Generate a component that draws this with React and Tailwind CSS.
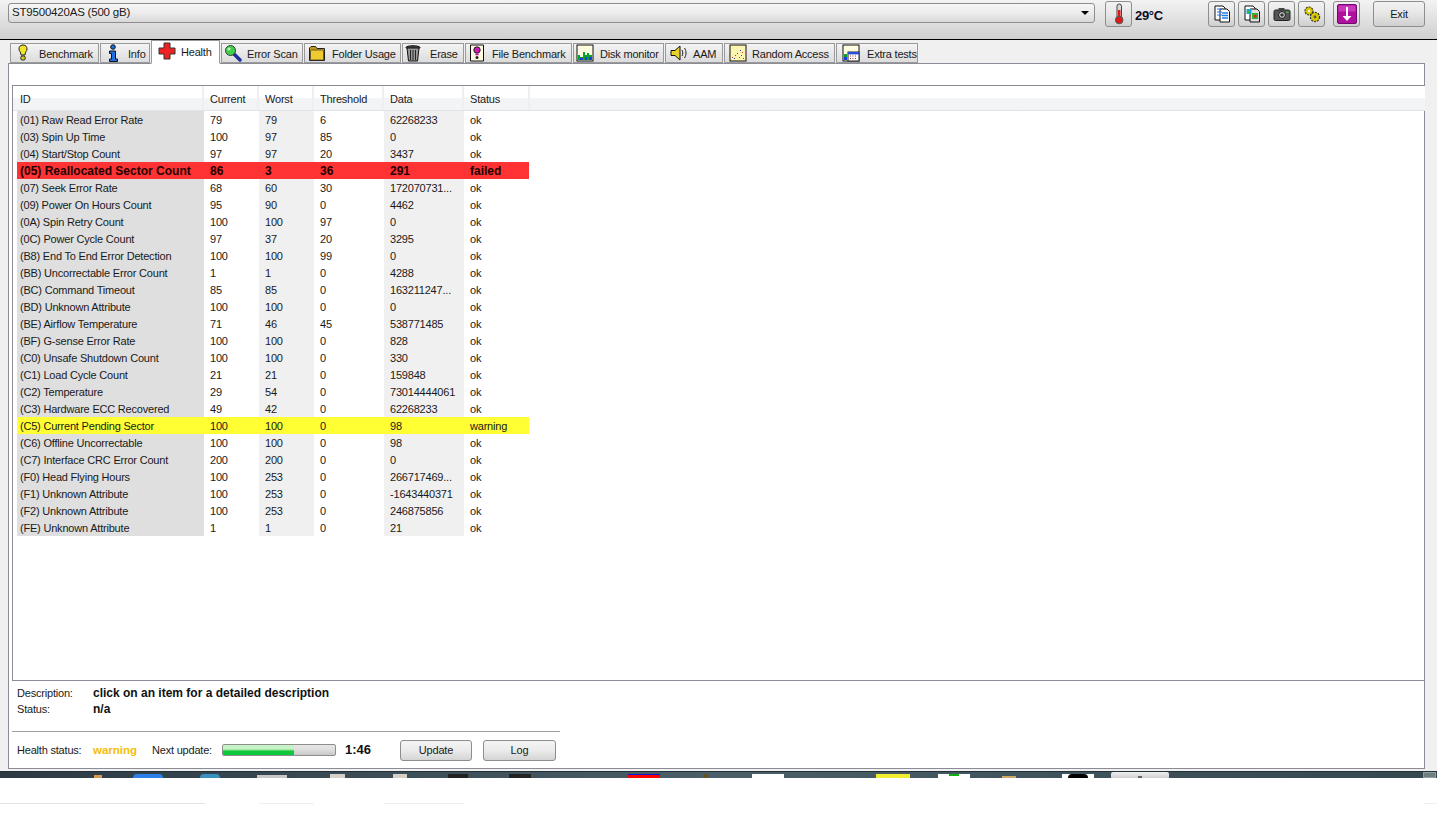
import React from "react";

const rows = [
  ["(01) Raw Read Error Rate", "79", "79", "6", "62268233", "ok"],
  ["(03) Spin Up Time", "100", "97", "85", "0", "ok"],
  ["(04) Start/Stop Count", "97", "97", "20", "3437", "ok"],
  ["(05) Reallocated Sector Count", "86", "3", "36", "291", "failed", "red"],
  ["(07) Seek Error Rate", "68", "60", "30", "172070731...", "ok"],
  ["(09) Power On Hours Count", "95", "90", "0", "4462", "ok"],
  ["(0A) Spin Retry Count", "100", "100", "97", "0", "ok"],
  ["(0C) Power Cycle Count", "97", "37", "20", "3295", "ok"],
  ["(B8) End To End Error Detection", "100", "100", "99", "0", "ok"],
  ["(BB) Uncorrectable Error Count", "1", "1", "0", "4288", "ok"],
  ["(BC) Command Timeout", "85", "85", "0", "163211247...", "ok"],
  ["(BD) Unknown Attribute", "100", "100", "0", "0", "ok"],
  ["(BE) Airflow Temperature", "71", "46", "45", "538771485", "ok"],
  ["(BF) G-sense Error Rate", "100", "100", "0", "828", "ok"],
  ["(C0) Unsafe Shutdown Count", "100", "100", "0", "330", "ok"],
  ["(C1) Load Cycle Count", "21", "21", "0", "159848", "ok"],
  ["(C2) Temperature", "29", "54", "0", "73014444061", "ok"],
  ["(C3) Hardware ECC Recovered", "49", "42", "0", "62268233", "ok"],
  ["(C5) Current Pending Sector", "100", "100", "0", "98", "warning", "yellow"],
  ["(C6) Offline Uncorrectable", "100", "100", "0", "98", "ok"],
  ["(C7) Interface CRC Error Count", "200", "200", "0", "0", "ok"],
  ["(F0) Head Flying Hours", "100", "253", "0", "266717469...", "ok"],
  ["(F1) Unknown Attribute", "100", "253", "0", "-1643440371", "ok"],
  ["(F2) Unknown Attribute", "100", "253", "0", "246875856", "ok"],
  ["(FE) Unknown Attribute", "1", "1", "0", "21", "ok"],
];

const S = ({ children, w = 18, h = 18, vb = "0 0 18 18" }) => (
  <svg width={w} height={h} viewBox={vb} className="shrink-0">{children}</svg>
);

const Bulb = () => (
  <S>
    <path d="M9 1c3 0 4 2 4 4 0 2-2 3-2 6H7c0-3-2-4-2-6 0-2 1-4 4-4z" fill="#f2e52a" stroke="#222" />
    <rect x="6.8" y="12" width="4.4" height="4" rx="1.5" fill="#d8c820" stroke="#222" />
  </S>
);
const Info = () => (
  <S>
    <circle cx="9" cy="3" r="2.3" fill="#1f6fe0" stroke="#111" />
    <path d="M5.5 7h6v8h2v2.5h-8V15h2V9.5h-2z" fill="#1f6fe0" stroke="#111" />
  </S>
);
const Cross = () => (
  <S>
    <path d="M6 1h6v5h5v6h-5v5H6v-5H1V6h5z" fill="#ee2222" stroke="#333" />
  </S>
);
const Mag = () => (
  <S>
    <path d="M10 10l6 6" stroke="#1d2f9a" strokeWidth="3.4" strokeLinecap="round" />
    <circle cx="6.5" cy="6.5" r="5" fill="#3fd04a" stroke="#3a3a3a" />
    <circle cx="5" cy="5" r="1.6" fill="#b9f3bc" />
  </S>
);
const Folder = () => (
  <S>
    <path d="M1.5 4V16.500h15V4.500H9L7.500 2.500H3z" fill="#c89c10" stroke="#222" />
    <rect x="2.500" y="6" width="13" height="10" rx="1" fill="#eecb2e" stroke="#333" strokeWidth=".7" />
  </S>
);
const Trash = () => (
  <S>
    <ellipse cx="9" cy="3.500" rx="7" ry="1.800" fill="#444" stroke="#111" />
    <path d="M3 4l1.500 13h9L15 4z" fill="#999" stroke="#111" />
    <path d="M6.500 6v10M9 6v10M11.500 6v10" stroke="#222" />
  </S>
);
const FileEx = () => (
  <S>
    <path d="M2.500 1h13v16h-13z" fill="#fffbe0" stroke="#111" />
    <circle cx="9" cy="6" r="3.200" fill="#d018b8" stroke="#222" />
    <rect x="7.300" y="9.500" width="3.400" height="1.800" fill="#d018b8" />
    <circle cx="9" cy="13.500" r="1.500" fill="#222" />
  </S>
);
const Chart = () => (
  <S>
    <rect x="1" y="1" width="16" height="16" fill="#fffde0" stroke="#111" />
    <path d="M2 16V11h2v5zM4 16V13h3v3zM7 16V8h2v8zM9 16v-5h2v5zM11 16V9h2v7zM13 16v-5h3v5z" fill="#0aa02a" />
    <path d="M4 16v-2h3v2zM9 16v-3h2v3zM13 16v-3h3v3z" fill="#1a3fe0" />
  </S>
);
const Speaker = () => (
  <S>
    <path d="M1 6.500h4L10 2v14l-5-4.500H1z" fill="#e8d22a" stroke="#111" />
    <path d="M12 6c1 1.500 1 4.500 0 6M14.500 4c2 3 2 7 0 10" stroke="#222" fill="none" />
  </S>
);
const Scatter = () => (
  <S>
    <rect x="1" y="1" width="16" height="16" fill="#fdf6b0" stroke="#111" />
    <g fill="#e02020"><rect x="3" y="13" width="1" height="1" /><rect x="6" y="11" width="1" height="1" /><rect x="10" y="13" width="1" height="1" /><rect x="13" y="8" width="1" height="1" /><rect x="14" y="14" width="1" height="1" /></g>
    <g fill="#2040d0"><rect x="5" y="14" width="1" height="1" /><rect x="8" y="9" width="1" height="1" /><rect x="11" y="6" width="1" height="1" /><rect x="12" y="11" width="1" height="1" /></g>
  </S>
);
const ChartCal = () => (
  <S>
    <rect x="1" y="1" width="16" height="16" fill="#fffde0" stroke="#111" />
    <path d="M2 16v-6h3v6z" fill="#0aa02a" />
    <path d="M2 16v-3h3v3z" fill="#1a3fe0" />
    <rect x="6" y="8" width="11" height="9" fill="#fff" stroke="#222" />
    <rect x="6" y="8" width="11" height="2.400" fill="#2a50d8" />
    <path d="M8 12h1M10.500 12h1M13 12h1M8 14.500h1M10.500 14.500h1M13 14.500h1" stroke="#c03030" />
  </S>
);

const Thermo = () => (
  <S w={18} h={22} vb="0 0 18 22">
    <rect x="7" y="1" width="4.500" height="15" rx="2.200" fill="#d8d8d8" stroke="#444" />
    <rect x="8" y="7" width="2.500" height="9" fill="#e01818" />
    <circle cx="9.200" cy="17" r="3.800" fill="#e01818" stroke="#555" />
  </S>
);
const CopyText = () => (
  <S>
    <path d="M2 1h8l2 2v12H2z" fill="#fff" stroke="#111" />
    <path d="M7 4h7l2.500 2.500V17H7z" fill="#fff" stroke="#111" />
    <path d="M4 4h5M4 7h5M4 10h5" stroke="#1f7be8" />
    <path d="M9 8h6M9 10.500h6M9 13h6" stroke="#1f7be8" strokeWidth="1.300" />
  </S>
);
const CopyPic = () => (
  <S>
    <path d="M2 1h8l2 2v12H2z" fill="#fff" stroke="#111" />
    <path d="M7 4h7l2.500 2.500V17H7z" fill="#ddd" stroke="#111" />
    <rect x="3.500" y="4" width="5" height="5" fill="#1fa4d8" />
    <rect x="5" y="6" width="2" height="2" fill="#2fc02a" />
    <rect x="9" y="8" width="6" height="6" fill="#36b030" />
    <rect x="11" y="10" width="2.500" height="2.500" fill="#e02020" />
  </S>
);
const Camera = () => (
  <S>
    <rect x="1" y="5" width="16" height="10.500" rx="1.500" fill="#555" stroke="#222" />
    <rect x="5.500" y="3" width="6" height="3" fill="#444" />
    <circle cx="9" cy="10" r="3.400" fill="#ddd" stroke="#111" />
    <circle cx="9" cy="10" r="1.800" fill="#333" />
    <rect x="13.500" y="6.500" width="2" height="1.500" fill="#26d030" />
  </S>
);
const Gears = () => (
  <S>
    <circle cx="6" cy="6" r="4" fill="#d8c800" stroke="#333" strokeWidth="1.200" strokeDasharray="2 1" />
    <circle cx="6" cy="6" r="1.200" fill="#fff" />
    <circle cx="12" cy="12" r="4.600" fill="#d8c800" stroke="#333" strokeWidth="1.200" strokeDasharray="2 1" />
    <circle cx="12" cy="12" r="1.400" fill="#555" />
  </S>
);
const Purple = () => (
  <svg width="20" height="20" viewBox="0 0 20 20" className="shrink-0">
    <rect x="0.500" y="0.500" width="19" height="19" rx="1.500" fill="#b0109c" stroke="#6c0a70" />
    <rect x="1.500" y="1.500" width="17" height="6" fill="#c83ab8" />
    <path d="M9 3h2v9h3.500L10 17l-4.500-5H9z" fill="#fff" />
  </svg>
);

const tabs = [
  ["Benchmark", Bulb, "w-[89px]", "pl-[3px] gap-[7px]"],
  ["Info", Info, "w-[50px]", "pl-[3px] gap-[6px]"],
  ["Health", Cross, "w-[69px]", "pl-[6px] gap-[5px]", true],
  ["Error Scan", Mag, "w-[82px]", "pl-[2px] gap-[5px]"],
  ["Folder Usage", Folder, "w-[97px]", "pl-[3px] gap-[6px]"],
  ["Erase", Trash, "w-[62px]", "pl-[1px] gap-[8px]"],
  ["File Benchmark", FileEx, "w-[107px]", "pl-[2px] gap-[6px]"],
  ["Disk monitor", Chart, "w-[91px]", "pl-[2px] gap-[6px]"],
  ["AAM", Speaker, "w-[58px]", "pl-[4px] gap-[5px]"],
  ["Random Access", Scatter, "w-[111px]", "pl-[4px] gap-[5px]"],
  ["Extra tests", ChartCal, "w-[82px]", "pl-[5px] gap-[7px]"],
];

const ToolBtn = ({ children, cls = "" }) => (
  <div className={"w-[27px] h-[26px] flex items-center justify-center rounded-[3px] border border-[#8e8e8e] bg-gradient-to-b from-[#f2f2f2] via-[#e6e6e6] to-[#cfcfcf] " + cls}>
    {children}
  </div>
);

const colW = ["w-[187px]", "w-[55px]", "w-[55px]", "w-[70px]", "w-[80px]", "w-[65px]"];
const colBg = ["bg-[#dfdfdf]", "bg-white", "bg-[#f0f0f0]", "bg-white", "bg-[#f0f0f0]", "bg-white"];
const colPad = ["pl-[3px]", "pl-[6px]", "pl-[6px]", "pl-[6px]", "pl-[6px]", "pl-[6px]"];

const Row = ({ r }) => {
  const hl = r[6];
  const wrap = hl === "red" ? "bg-[#ff3333] font-bold text-[12px] tracking-normal text-[#200]" : hl === "yellow" ? "bg-[#ffff33]" : "";
  return (
    <div className={"flex w-[512px] h-[17px] items-center leading-[19px] " + wrap}>
      {r.slice(0, 6).map((c, i) => (
        <div key={i} className={colW[i] + " h-full whitespace-nowrap overflow-hidden " + colPad[i] + " " + (hl ? "" : colBg[i])}>{c}</div>
      ))}
    </div>
  );
};

const headers = [
  ["ID", "w-[191px] pl-[7px]"],
  ["Current", "w-[55px] pl-[6px]"],
  ["Worst", "w-[55px] pl-[6px]"],
  ["Threshold", "w-[70px] pl-[6px]"],
  ["Data", "w-[80px] pl-[6px]"],
  ["Status", "w-[66px] pl-[6px]"],
];

const Btn = ({ children, cls }) => (
  <div className={"h-[21px] flex items-center justify-center pt-[1px] rounded-[3px] border border-[#8e8e8e] bg-gradient-to-b from-[#f4f4f4] via-[#ebebeb] to-[#d4d4d4] " + cls}>{children}</div>
);

export default function App() {
  return (
    <div className="w-[1456px] h-[834px] bg-white overflow-hidden text-[11px] tracking-[-0.2px] text-[#1a1a1a] font-['Liberation_Sans',Arial,sans-serif]">
      <div className="w-[1437px] flex flex-col">
        {/* toolbar */}
        <div className="h-[40px] border-b border-black bg-gradient-to-b from-[#f3f3f3] to-[#cfcfcf] flex items-start pt-[1px] shrink-0">
          <div className="ml-[8px] mt-[2px] w-[1087px] h-[20px] rounded-[3px] border border-[#8e8e8e] bg-gradient-to-b from-[#f6f6f6] via-[#ececec] to-[#d9d9d9] flex items-center justify-between pl-[3px] pr-[5px]">
            <span className="text-[11.5px]">ST9500420AS (500 gB)</span>
            <span className="w-0 h-0 border-l-[4px] border-r-[4px] border-t-[4px] border-l-transparent border-r-transparent border-t-black" />
          </div>
          <ToolBtn cls="ml-[10px]"><Thermo /></ToolBtn>
          <span className="ml-[3px] w-[73px] mt-[5px] font-bold text-[13px] tracking-[-0.3px] text-[#0c0c20]">29°C</span>
          <ToolBtn><CopyText /></ToolBtn>
          <ToolBtn cls="ml-[3px]"><CopyPic /></ToolBtn>
          <ToolBtn cls="ml-[3px]"><Camera /></ToolBtn>
          <ToolBtn cls="ml-[3px]"><Gears /></ToolBtn>
          <ToolBtn cls="ml-[8px]"><Purple /></ToolBtn>
          <div className="ml-[13px] w-[52px] h-[26px] flex items-center justify-center rounded-[3px] border border-[#8e8e8e] bg-gradient-to-b from-[#f2f2f2] via-[#e6e6e6] to-[#cfcfcf]">Exit</div>
        </div>

        {/* main */}
        <div className="bg-[#f0f0f0] h-[731px] flex flex-col">
          {/* tabs */}
          <div className="flex h-[23px] pl-[10px] gap-[1px] items-end shrink-0 relative z-10">
            {tabs.map(([label, Icon, w, pad, active]) => (
              <div
                key={label}
                className={
                  "flex items-center shrink-0 border border-[#9a9a9a] whitespace-nowrap " + w + " " + pad + " " +
                  (active ? "h-[24px] -mb-[1px] bg-white border-b-white pb-[2px]" : "h-[20px] bg-gradient-to-b from-[#f4f4f4] to-[#dcdcdc]")
                }
              >
                <Icon />
                <span className="pt-[2px]">{label}</span>
              </div>
            ))}
          </div>

          {/* page */}
          <div className="ml-[8px] w-[1417px] h-[706px] border border-[#8c8c96] bg-white flex flex-col shrink-0">
            <div className="h-[21px] shrink-0" />
            {/* list */}
            <div className="ml-[3px] w-[1413px] h-[596px] border-t border-l border-b border-[#8c8c96] shrink-0 flex flex-col">
              <div className="h-[25px] flex shrink-0 border-b border-[#e4e4e4] bg-gradient-to-b from-white from-50% to-[#f3f4f6] to-50%">
                {headers.map(([h, cls]) => (
                  <div key={h} className={cls + " border-r-2 border-[#eeeff1] flex items-center pt-[3px]"}>{h}</div>
                ))}
              </div>
              <div className="pl-[4px]">
                {rows.map((r) => <Row key={r[0]} r={r} />)}
              </div>
            </div>
            {/* description */}
            <div className="h-[50px] shrink-0 pl-[8px] pt-[4px] flex flex-col">
              <div className="flex h-[16px] items-center"><span className="w-[76px] pt-[1px]">Description:</span><b className="text-[#111] text-[12px] tracking-normal">click on an item for a detailed description</b></div>
              <div className="flex h-[16px] items-center"><span className="w-[76px] pt-[1px]">Status:</span><b className="text-[#111] text-[12px] tracking-normal">n/a</b></div>
            </div>
            <div className="ml-[3px] w-[548px] h-px bg-[#a0a0a0] shrink-0" />
            <div className="flex items-center pl-[8px] h-[36px] shrink-0">
              <span className="w-[76px] pt-[1px]">Health status:</span>
              <b className="w-[59px] pt-[1px] text-[#f5be0a] text-[11.5px] tracking-normal">warning</b>
              <span className="w-[70px] pt-[1px]">Next update:</span>
              <div className="w-[114px] h-[12px] rounded-[2px] border border-[#8e8e8e] bg-gradient-to-b from-[#e6e6e6] via-[#dedede] to-[#c8c8c8] overflow-hidden">
                <div className="w-[71px] h-full bg-gradient-to-b from-[#c6f3c6] from-40% to-[#0cc83a] to-60%" />
              </div>
              <b className="ml-[9px] w-[55px] text-[13px] tracking-normal text-[#111]">1:46</b>
              <Btn cls="w-[72px]">Update</Btn>
              <Btn cls="ml-[11px] w-[73px]">Log</Btn>
            </div>
          </div>
        </div>

        {/* taskbar sliver */}
        <div className="h-[7px] border-t border-[#232f38] bg-gradient-to-r from-[#2c3a44] via-[#4a5f68] to-[#35474f] flex overflow-hidden items-end">
          <div className="ml-[94px] w-[8px] h-[3px] bg-[#d89a50]" />
          <div className="ml-[31px] w-[30px] h-[4px] rounded-t-full bg-[#2f7fe8]" />
          <div className="ml-[37px] w-[20px] h-[4px] rounded-t-full bg-[#3a90c0]" />
          <div className="ml-[37px] w-[30px] h-[3px] bg-[#c8c8c8]" />
          <div className="ml-[43px] w-[15px] h-[4px] bg-[#d8d0c4]" />
          <div className="ml-[48px] w-[14px] h-[4px] bg-[#d8d0c4]" />
          <div className="ml-[41px] w-[20px] h-[4px] bg-[#222]" />
          <div className="ml-[41px] w-[22px] h-[4px] bg-[#222]" />
          <div className="ml-[97px] w-[32px] h-[4px] bg-[#ff0000] border-t border-[#1010d0]" />
          <div className="ml-[44px] w-[4px] h-[4px] bg-[#6a5020]" />
          <div className="ml-[44px] w-[32px] h-[4px] bg-white" />
          <div className="ml-[92px] w-[34px] h-[4px] bg-[#f2ee30]" />
          <div className="ml-[28px] w-[32px] h-[4px] bg-white flex justify-center"><div className="w-[10px] h-[2px] bg-[#10b010]" /></div>
          <div className="ml-[32px] w-[14px] h-[2px] bg-[#cfa868]" />
          <div className="ml-[46px] w-[32px] h-[4px] bg-white flex justify-center"><div className="w-[20px] h-[4px] rounded-t-full bg-black" /></div>
          <div className="ml-[17px] w-[58px] h-[6px] bg-gradient-to-b from-[#f0f0f0] to-[#d0d0d0] rounded-t-[2px] flex justify-center items-end"><div className="w-[4px] h-[2px] bg-[#666]" /></div>
          <div className="ml-[254px] w-[13px] h-[6px] bg-[#6d7f80] border border-[#8fa0a0]" />
        </div>

        {/* stray lines */}
        <div className="mt-[25px] flex h-px w-[1437px]">
          <div className="w-[205px] bg-[#e4e4e4]" />
          <div className="ml-[54px] w-[55px] bg-[#eeeeee]" />
          <div className="ml-[70px] w-[80px] bg-[#eeeeee]" />
          <div className="ml-[960px] w-[13px] bg-[#eeeeee]" />
        </div>
      </div>
    </div>
  );
}
